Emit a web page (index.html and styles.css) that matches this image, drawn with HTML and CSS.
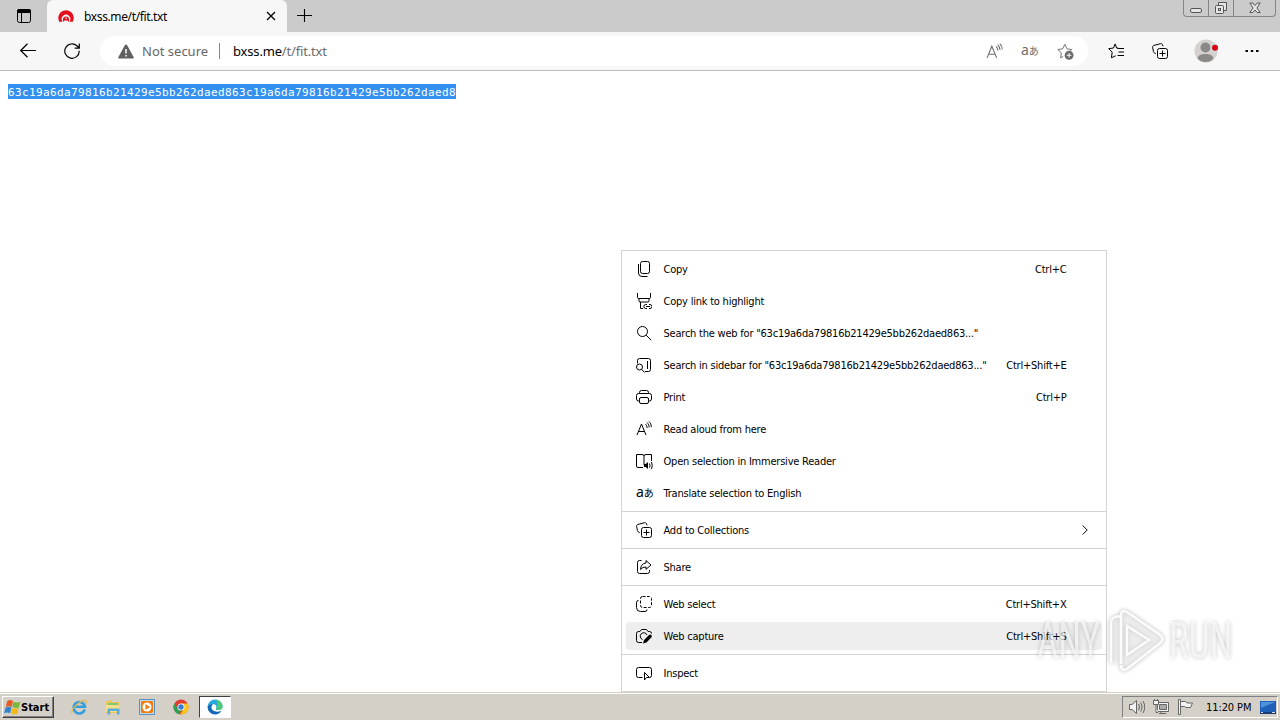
FILE: index.html
```
<!DOCTYPE html>
<html lang="en">

<head>
    <meta charset="utf-8">
    <meta name="viewport" content="width=device-width, initial-scale=1.0">
    <title>bxss.me/t/fit.txt</title>
    <link rel="stylesheet" href="styles.css">
</head>

<body>
    <!-- shared icons -->
    <svg class="defs">
        <symbol id="aloud" viewBox="0 0 16 16">
            <path d="M1 14 5.500 3l4.500 11M2.700 10.500h5.800M9.500 3.200c1 .9 1.600 2.200 1.600 3.800M11 1.500c1.400 1.500 2.200 3 2.200 5M13 .5c1.500 1.500 2.300 3 2.300 5.500" />
        </symbol>
        <symbol id="collections" viewBox="0 0 16 16">
            <path d="M3.800 10.800Q1.800 10 1.400 8.500L.6 4.200c-.1-.9.400-1.600 1.300-1.800L8.600.7c.9-.2 1.600.2 1.900 1l.5 1.600" />
            <rect x="5.500" y="5.500" width="10" height="10" rx="2" />
            <path d="M10.500 7.500v6M7.500 10.500h6" />
        </symbol>
    </svg>

    <header class="titlebar">
        <svg class="tab_menu" viewBox="0 0 16 16"><rect x="1.500" y="1.500" width="13" height="13" rx="2" /><path class="fill" d="M1 5V3q0-2 2-2h10q2 0 2 2v2z" /><path d="M5.500 5v9" /></svg>
        <div class="tab">
            <svg class="favicon" viewBox="0 0 16 16">
                <path d="M1.500 14A7.700 7.700 0 1 1 14.500 14L11.500 13.500a4.300 4.300 0 1 0-7 0z" fill="#e30f1c" />
                <path d="M5 14V11.500a3 3 0 0 1 6 0V14L9.500 12.500h-3z" fill="#e30f1c" />
                <circle cx="8" cy="10.300" r=".8" fill="#fff" />
            </svg>
            <span class="tab_title">bxss.me/t/fit.txt</span>
            <svg class="tab_close" viewBox="0 0 10 10"><path d="m1 1 8 8M9 1 1 9" /></svg>
        </div>
        <svg class="new_tab" viewBox="0 0 15 15"><path d="M7.500 1v13M0 7.500h15" /></svg>
        <div class="window_buttons">
            <span class="win_btn"><svg width="14" height="14" viewBox="0 0 14 14"><rect x="1.500" y="7.500" width="11" height="4" rx="1.500" /></svg></span>
            <span class="win_btn"><svg width="14" height="14" viewBox="0 0 14 14"><path d="M4.500 4V1.500h8v8H10" /><rect x="1.500" y="4.500" width="8" height="8" rx="1" /><rect x="4.500" y="7.500" width="2" height="2" /></svg></span>
            <span class="win_btn win_close"><svg width="12" height="12" viewBox="0 0 12 12"><path d="M.8 1h3L6 3.600 8.200 1h3L7.900 6l3.300 4.500h-3L6 8l-2.200 2.500h-3L4.100 6z" /></svg></span>
        </div>
    </header>

    <nav class="toolbar">
        <svg class="tool_icon back" viewBox="0 0 16 16"><path d="M16 7.500H.8M7.500.8.7 7.500l6.800 6.700" /></svg>
        <svg class="tool_icon reload" viewBox="0 0 16 16"><path d="M15.200 7.800a7.200 7.200 0 1 1-2.300-5L15.200 5M15.300.500V5.200h-4.600" /></svg>
        <div class="address">
            <svg class="warning" viewBox="0 0 16 15"><path d="M8 .5q.8 0 1.300 1l6.400 11.800q.5 1.200-.8 1.200H1.100q-1.300 0-.8-1.200L6.700 1.500Q7.200.5 8 .5z" fill="#5f5f5f" /><path d="M8 5v4.500M8 11v1.600" stroke="#fff" stroke-width="1.500" /></svg>
            <span class="secure">Not secure</span>
            <span class="divider"></span>
            <span class="url">bxss.me<span>/t/fit.txt</span></span>
            <div class="address_icons">
                <svg viewBox="0 0 16 16"><use href="#aloud" /></svg>
                <span class="translate"><span>a</span>あ</span>
                <svg viewBox="0 0 18 18"><path d="M6.500 14.300 3.800 15.700l.8-5.200-3.700-3.600L6 6.200 8.300 1.500l2.300 4.700 5.100.7-1.500 1.500" /><circle class="fill" cx="12.800" cy="13" r="4.700" /><path d="M12.800 10.500v5M10.300 13h5" stroke="#fff" /></svg>
            </div>
        </div>
        <div class="toolbar_icons">
            <svg width="17" height="16" viewBox="0 0 17 16"><path d="M10.500 5.200 8.600 5 7.200.9 5.500 5 .7 5.700l3.500 3.500-.8 5.600 4.300-2M9.500 5.500H16M10.500 9H16M9.500 12.500H16" /></svg>
            <svg width="16" height="16" viewBox="0 0 16 16"><use href="#collections" /></svg>
            <svg class="profile" width="24" height="24" viewBox="0 0 24 24"><circle cx="12" cy="12" r="11.500" fill="#d4d1ce" /><circle cx="11.500" cy="8.500" r="5" fill="#8b8988" /><path d="M3.500 19q1-4 8-4t8 4q-2 4-8 4t-8-4" fill="#8b8988" /><circle cx="20.500" cy="8.700" r="4" fill="#c8e1df" /><circle cx="21" cy="8.700" r="3" fill="#d90012" /></svg>
            <svg width="14" height="4" viewBox="0 0 14 4"><path d="M.5 1h2.500v2H.5zM5.800 1h2.400v2H5.800zM11 1h2.500v2H11z" class="fill" /></svg>
        </div>
    </nav>

    <main>
        <pre><span class="marked">63c19a6da79816b21429e5bb262daed863c19a6da79816b21429e5bb262daed8</span></pre>

        <div class="context_menu">
            <div class="item"><svg viewBox="0 0 16 16"><rect x="4.500" y=".5" width="9" height="12" rx="2" /><path d="M2.500 3v9q0 3.500 3.500 3.500h5.500" /></svg><span>Copy</span><kbd>Ctrl+C</kbd></div>
            <div class="item"><svg viewBox="0 0 16 16"><path d="M1.500 0v4.500q0 1 1 1h11q1 0 1-1V0M3 5.500V8q0 1 1 1h8q1 0 1-1V5.500M4.500 9v6.500H7" /><path d="M11 15.500H9.800a2 2 0 0 1 0-4H11M13 11.500h1a2 2 0 0 1 0 4h-1M10 13.500h4" /></svg><span>Copy link to highlight</span></div>
            <div class="item"><svg viewBox="0 0 16 16"><circle cx="6.500" cy="6.500" r="5" /><path d="m10.200 10.200 5 5" /></svg><span>Search the web for "63c19a6da79816b21429e5bb262daed863..."</span></div>
            <div class="item"><svg viewBox="0 0 16 16"><path d="M1.500 6.500V3.500q0-2 2-2h9q2 0 2 2v9q0 2-2 2H9M11.500 4v8" /><circle cx="3.500" cy="10" r="3" /><path d="m5.600 12.200 3 3.300" /></svg><span>Search in sidebar for "63c19a6da79816b21429e5bb262daed863..."</span><kbd>Ctrl+Shift+E</kbd></div>
            <div class="item"><svg viewBox="0 0 16 16"><path d="M3.500 4V3.500q0-2 2-2h5q2 0 2 2V4M3.500 12H2.500q-2 0-2-2V6.500q0-2 2-2h11q2 0 2 2V10q0 2-2 2h-1" /><rect x="3.500" y="8.500" width="9" height="6" rx="1.500" /></svg><span>Print</span><kbd>Ctrl+P</kbd></div>
            <div class="item"><svg viewBox="0 0 16 16"><use href="#aloud" /></svg><span>Read aloud from here</span></div>
            <div class="item"><svg class="wide" viewBox="0 0 17 16"><path d="M7 14.500H2q-1.500 0-1.500-1.500V1.500H6q2 0 2 1.500v9M8 3q0-1.500 2-1.500h5.500V8" /><path class="fill" d="M8 11h1.700l2.300-2v7l-2.300-2H8z" /><path d="M13.500 10.500q1 2 0 4M15.500 9q1.500 3.500 0 7" /></svg><span>Open selection in Immersive Reader</span></div>
            <div class="item"><span class="translate"><span>a</span>あ</span><span>Translate selection to English</span></div>
            <hr>
            <div class="item"><svg viewBox="0 0 16 16"><use href="#collections" /></svg><span>Add to Collections</span><svg class="arrow" viewBox="0 0 6 10"><path d="m.7.5 4.500 4.500L.7 9.500" /></svg></div>
            <hr>
            <div class="item"><svg viewBox="0 0 16 16"><path d="M5.500 1.500h-2q-2 0-2 2v9q0 2 2 2h8q2 0 2-2V11" /><path d="M10 1.500 15 6l-5 4.300V8q-3.500-.2-5.500 2.500Q5 4.300 10 4z" /></svg><span>Share</span></div>
            <hr>
            <div class="item"><svg viewBox="0 0 16 16"><path d="M2.500 4.500q-2 0-2 2v5q0 4 4 4h4.500q2 0 2-2" /><rect x="4.500" y=".5" width="11" height="11" rx="2" stroke-dasharray="3 1.500" /></svg><span>Web select</span><kbd>Ctrl+Shift+X</kbd></div>
            <div class="item active"><svg viewBox="0 0 16 16"><path d="M6 14.500H2.500q-2 0-2-2v-7q0-2 2-2H4l1.500-2h5l1.500 2h1.500q2 0 2 2" /><path d="M6.500 11.500A3.500 3.500 0 1 1 11 7" /><path class="fill" d="m7 15.500 1-3.500 5-5q1.200-1 2.200 0t.3 2.200L10.500 14.500z" /></svg><span>Web capture</span><kbd>Ctrl+Shift+S</kbd></div>
            <hr>
            <div class="item"><svg viewBox="0 0 16 16"><path d="M6.500 12.500h-4q-2 0-2-2v-6q0-2 2-2h11q2 0 2 2v6q0 2-2 2" /><path d="M8.500 7.500V15l2-2.500h3z" /></svg><span>Inspect</span></div>
        </div>

        <div class="watermark">
            <span>ANY</span>
            <svg viewBox="0 0 58 64">
                <path class="outer" d="M4 54V14q0-5 4-6l6-1v48zM14 7q0-7 6-4l32 22q7 5 0 10L20 60q-6 3-6-4z" />
                <path d="M4 54V14q0-4 4-6l6-1M14 55V7q0-7 6-4l32 22q7 5 0 10L20 60q-6 3-6-4M20 17l22 14-22 15z" />
            </svg>
            <span>RUN</span>
        </div>
    </main>

    <footer class="taskbar">
        <button class="start">
            <svg viewBox="0 0 16 16"><path d="M3 2q3-2 5.500 0L7.300 7.500Q4.500 6 1.700 7.500z" fill="#e65b24" /><path d="M9 2.500q3 1.500 6.500 0L14 8q-3 1.200-6-.5z" fill="#78b83b" /><path d="M1.500 8q3-1.500 5.500 0l-1.300 5.500Q3 12 0 13.500z" fill="#2f83cf" /><path d="M7.700 8.300q3 1.500 6 .5l-1.200 5.200q-3 1-6-.5z" fill="#f3b91b" /></svg>Start</button>
        <div class="tasks">
            <svg viewBox="0 0 16 16"><path d="M13.800 10.500A5.700 5.700 0 1 1 14 7.800H4" stroke="#329ee0" stroke-width="2.600" fill="none" /><path d="M1 14.500Q-.5 11 6 5.500t9-3.500q1 .8-.5 3" stroke="#e3b64e" stroke-width="1.300" fill="none" /></svg>
            <svg viewBox="0 0 16 16"><path d="M1 2.500 6 1l1 2h7v11H1z" fill="#e9c45d" /><path d="M3 4h10v4H3z" fill="#84c86e" /><path d="M1 6h13v7H1z" fill="#f6df8b" /><path d="M2.500 15.500V10.500q0-1 1-1h10q1 0 1 1v5h-2.500v-3.500H5v3.500z" fill="#59aed9" /></svg>
            <svg viewBox="0 0 16 16"><path d="M.5.5h15v15H.5z" fill="#c6d9e8" stroke="#5792c1" /><path d="M3 2h10l1 1v10l-1 1H3l-1-1V3z" fill="#f07c0d" /><circle cx="8" cy="8" r="4.500" fill="#fff" /><path d="m6.500 5 4.500 3-4.500 3z" fill="#f07c0d" /></svg>
            <svg viewBox="0 0 16 16"><circle cx="8" cy="8" r="7.500" fill="#e23d30" /><path d="M1.300 4.500 5 10l3 1.500-2 3.800A7.500 7.500 0 0 1 1.300 4.500" fill="#2fa352" /><path d="M8 4.500h6.700A7.500 7.500 0 0 1 7 15.400l4-5.900z" fill="#fbc817" /><circle cx="8" cy="8" r="3.500" fill="#fff" /><circle cx="8" cy="8" r="2.700" fill="#347de0" /></svg>
            <div class="task_active"><svg viewBox="0 0 16 16"><path d="M.5 8A7.500 7.500 0 0 1 8 .5q6 .5 7.500 6Q16 11 11 11 8.500 11 9 9.500 10.500 5.500 6 5 2 5 .5 8" fill="#25a9dc" /><path d="M9 .6q5 1 6.500 5.400Q16 11 11.500 11 9 11 9.300 9.500 11.500 5 9 .6" fill="#4fc978" /><path d="M.5 8Q2 4.500 6 5q-3 3-.5 6 3.500 3 9 .8-2 3.700-6.500 3.700A7.500 7.500 0 0 1 .5 8" fill="#1267b8" /></svg></div>
        </div>
        <div class="tray">
            <svg viewBox="0 0 16 16"><path d="M.5 5.500H3L7.500 1.500v13L3 10.500H.5z" class="light" /><path d="M9.500 5q2 3 0 6M11.700 3.500q3 4.500 0 9M14 2q3.500 6 0 12" /></svg>
            <svg viewBox="0 0 16 16"><path d="M4.500 3.500h11v9h-11z" class="light" /><path d="M6.500 5.500h7v5h-7z" fill="#aaa" /><path d="M8 12.500v2M6 14.500h7" /><path d="M.5 1.500h5v4h-5zM1.500 0v2M4.500 0v2M3 5.500v8h2" class="light" /></svg>
            <svg viewBox="0 0 16 16"><path d="M3.500 2.500h5l1.500 1.500h5.500l-2 4.500H9L7.500 7.500h-4z" class="light" /><path d="M1.500.5h2v15h-2z" class="light" /></svg>
            <time>11:20 PM</time>
            <svg class="desktop" viewBox="0 0 16 13"><path d="M0 0h16v13H0z" fill="#1f61b8" /><path d="M1 1h14L1 7z" fill="#4e91dc" /><path d="M0 11h16v2H0z" fill="#183d78" /><path d="M1 11h2v1H1zM12 11h3v1h-3z" fill="#ddd" /></svg>
        </div>
    </footer>
</body>

</html>
```
FILE: styles.css
```
* {
    box-sizing: border-box;
}

body {
    margin: 0;
    width: 1280px;
    height: 720px;
    overflow: hidden;
    display: flex;
    flex-direction: column;
    background-color: white;
    font-family: "DejaVu Sans Condensed", "DejaVu Sans", sans-serif;
    font-stretch: condensed;
    font-size: 11px;
    color: black;
}

svg {
    display: block;
    flex: none;
    fill: none;
    stroke: currentColor;
    stroke-width: 1;
}

.fill {
    fill: currentColor;
    stroke: none;
}

.defs {
    display: none;
}

/* window title and tabs */

.titlebar {
    display: flex;
    height: 32px;
    flex: none;
    background-color: #cbcbcb;
}

.tab_menu {
    width: 16px;
    height: 16px;
    margin: 8px 15px 0 16px;
}

.tab {
    display: flex;
    align-items: center;
    width: 240px;
    height: 32px;
    padding: 0 11px;
    border-radius: 6px 6px 0 0;
    background-color: #f7f7f7;
}

.favicon {
    width: 16px;
    height: 16px;
    margin-right: 10px;
    stroke: none;
}

.tab_title {
    flex: 1;
    font-family: "Noto Sans", sans-serif;
    font-size: 12px;
    letter-spacing: -0.37px;
}

.tab_close {
    width: 10px;
    height: 10px;
    stroke-width: 1.3;
}

.new_tab {
    width: 15px;
    height: 15px;
    margin: 8px 0 0 10px;
    stroke-width: 1.1;
}

.window_buttons {
    display: flex;
    width: 93px;
    height: 17px;
    margin: 0 4px 0 auto;
    border: 1px solid #858585;
    border-top: 0;
    border-radius: 0 0 4px 4px;
    color: #555;
}

.win_btn {
    display: flex;
    align-items: center;
    justify-content: center;
    width: 25px;
    border-right: 1px solid #858585;
}

.win_btn svg {
    fill: #e6e6e6;
}

.win_close {
    flex: 1;
    border: 0;
}

/* address bar */

.toolbar {
    display: flex;
    align-items: center;
    height: 39px;
    flex: none;
    background-color: #f7f7f7;
    border-bottom: 1px solid #bdbdbd;
}

.tool_icon {
    width: 16px;
    height: 16px;
    stroke-width: 1.2;
}

.back {
    margin-left: 20px;
}

.reload {
    margin-left: 28px;
}

.address {
    display: flex;
    align-items: center;
    width: 988px;
    height: 30px;
    margin-left: 20px;
    padding: 0 14px 0 18px;
    border-radius: 15px;
    background-color: white;
    font-family: "Noto Sans", sans-serif;
    font-size: 13px;
}

.warning {
    width: 16px;
    height: 15px;
    stroke: none;
}

.secure {
    width: 77px;
    margin-left: 8px;
    color: #666;
}

.divider {
    width: 1px;
    height: 16px;
    margin-right: 13px;
    background-color: #888;
}

.url {
    letter-spacing: -0.17px;
}

.url span {
    color: #6c6c6c;
}

.address_icons {
    display: flex;
    align-items: center;
    gap: 18px;
    margin-left: auto;
    color: #6b6b6b;
}

.address_icons svg {
    width: 17px;
    height: 17px;
}

/* latin a followed by a small kana */

.translate {
    display: flex;
    align-items: center;
    width: 18px;
    height: 16px;
    font-family: "Noto Sans", "Noto Sans CJK JP", sans-serif;
    font-size: 10px;
    line-height: 16px;
    letter-spacing: 0;
    white-space: nowrap;
}

.translate span {
    margin-top: -2px;
    font-size: 14px;
}

.toolbar_icons {
    display: flex;
    align-items: center;
    margin-left: 20px;
}

.toolbar_icons svg + svg {
    margin-left: 27px;
}

.toolbar_icons .profile {
    margin-left: 26px;
    stroke: none;
}

/* page */

main {
    flex: 1;
    position: relative;
}

pre {
    margin: 13px 8px;
    height: 15px;
    font-family: "DejaVu Sans Mono", monospace;
    font-size: 11px;
    line-height: 17px;
    letter-spacing: 0.378px;
}

.marked {
    display: inline-block;
    width: 448px;
    height: 15px;
    background-color: #3390f0;
    color: white;
}

.context_menu {
    position: absolute;
    left: 621px;
    top: 179px;
    width: 486px;
    padding: 2px 0;
    border: 1px solid #d3d3d3;
    background-color: white;
}

.context_menu hr {
    height: 1px;
    margin: 4px 0;
    border: 0;
    background-color: #d3d3d3;
}

.item {
    display: flex;
    align-items: center;
    height: 28px;
    margin: 2px 4px;
    padding: 0 35.5px 0 10px;
    border-radius: 4px;
    white-space: nowrap;
    letter-spacing: -0.22px;
}

.item + .item {
    margin-top: 4px;
}

.item svg {
    width: 16px;
    height: 16px;
    margin-right: 11.5px;
}

.item .wide {
    width: 17px;
    margin-right: 10.5px;
}

.item .translate {
    width: 16px;
    margin-right: 11.5px;
}

.item kbd {
    margin-left: auto;
    font-family: inherit;
}

.item .arrow {
    width: 6px;
    height: 10px;
    margin: 0 -21.5px 0 auto;
}

.active {
    background-color: #eee;
}

.watermark {
    position: absolute;
    left: 1037px;
    top: 538px;
    display: flex;
    align-items: center;
    gap: 4px;
    font-family: "Roboto", sans-serif;
    font-size: 50px;
    color: rgba(255, 255, 255, 0.65);
    filter: drop-shadow(0 0 2px rgba(0, 0, 0, 0.35));
}

.watermark span {
    width: 66px;
    transform: scaleX(0.74);
    transform-origin: left;
}

.watermark svg {
    width: 58px;
    height: 64px;
    stroke: rgba(255, 255, 255, 0.9);
    stroke-width: 2.5;
}

.watermark .outer {
    fill: rgba(255, 255, 255, 0.3);
    stroke: none;
}

/* taskbar */

.taskbar {
    display: flex;
    align-items: center;
    height: 28px;
    flex: none;
    padding: 1px 2px 0;
    border-top: 1px solid #d4d0c8;
    box-shadow: inset 0 1px white;
    background-color: #d4d0c8;
}

.start {
    display: flex;
    align-items: center;
    width: 52px;
    height: 22px;
    padding: 0 1px;
    border: 1px solid;
    border-color: white #404040 #404040 white;
    box-shadow: inset -1px -1px #808080;
    background-color: #d4d0c8;
    color: black;
    font-family: inherit;
    font-stretch: condensed;
    font-size: 11px;
    font-weight: bold;
}

.start svg {
    width: 17px;
    height: 17px;
    stroke: none;
}

.tasks {
    display: flex;
    align-items: center;
    gap: 18px;
    margin-left: 17px;
}

.tasks svg {
    width: 16px;
    height: 16px;
    stroke: none;
}

.task_active {
    display: flex;
    align-items: center;
    justify-content: center;
    width: 32px;
    height: 22px;
    margin-left: -8px;
    border: 1px solid;
    border-color: #404040 white white #404040;
    background-color: white;
}

.tray {
    display: flex;
    align-items: center;
    width: 156px;
    height: 22px;
    margin-left: auto;
    padding-left: 6px;
    border: 1px solid;
    border-color: #808080 white white #808080;
}

.tray svg {
    width: 16px;
    height: 16px;
    margin-right: 8px;
    color: #666;
}

.tray .light {
    fill: #f4f4f4;
}

.tray time {
    width: 47px;
    margin-left: 5px;
    letter-spacing: -0.1px;
    white-space: nowrap;
}

.tray .desktop {
    height: 13px;
    margin: 0 0 0 7px;
    stroke: none;
}
```
